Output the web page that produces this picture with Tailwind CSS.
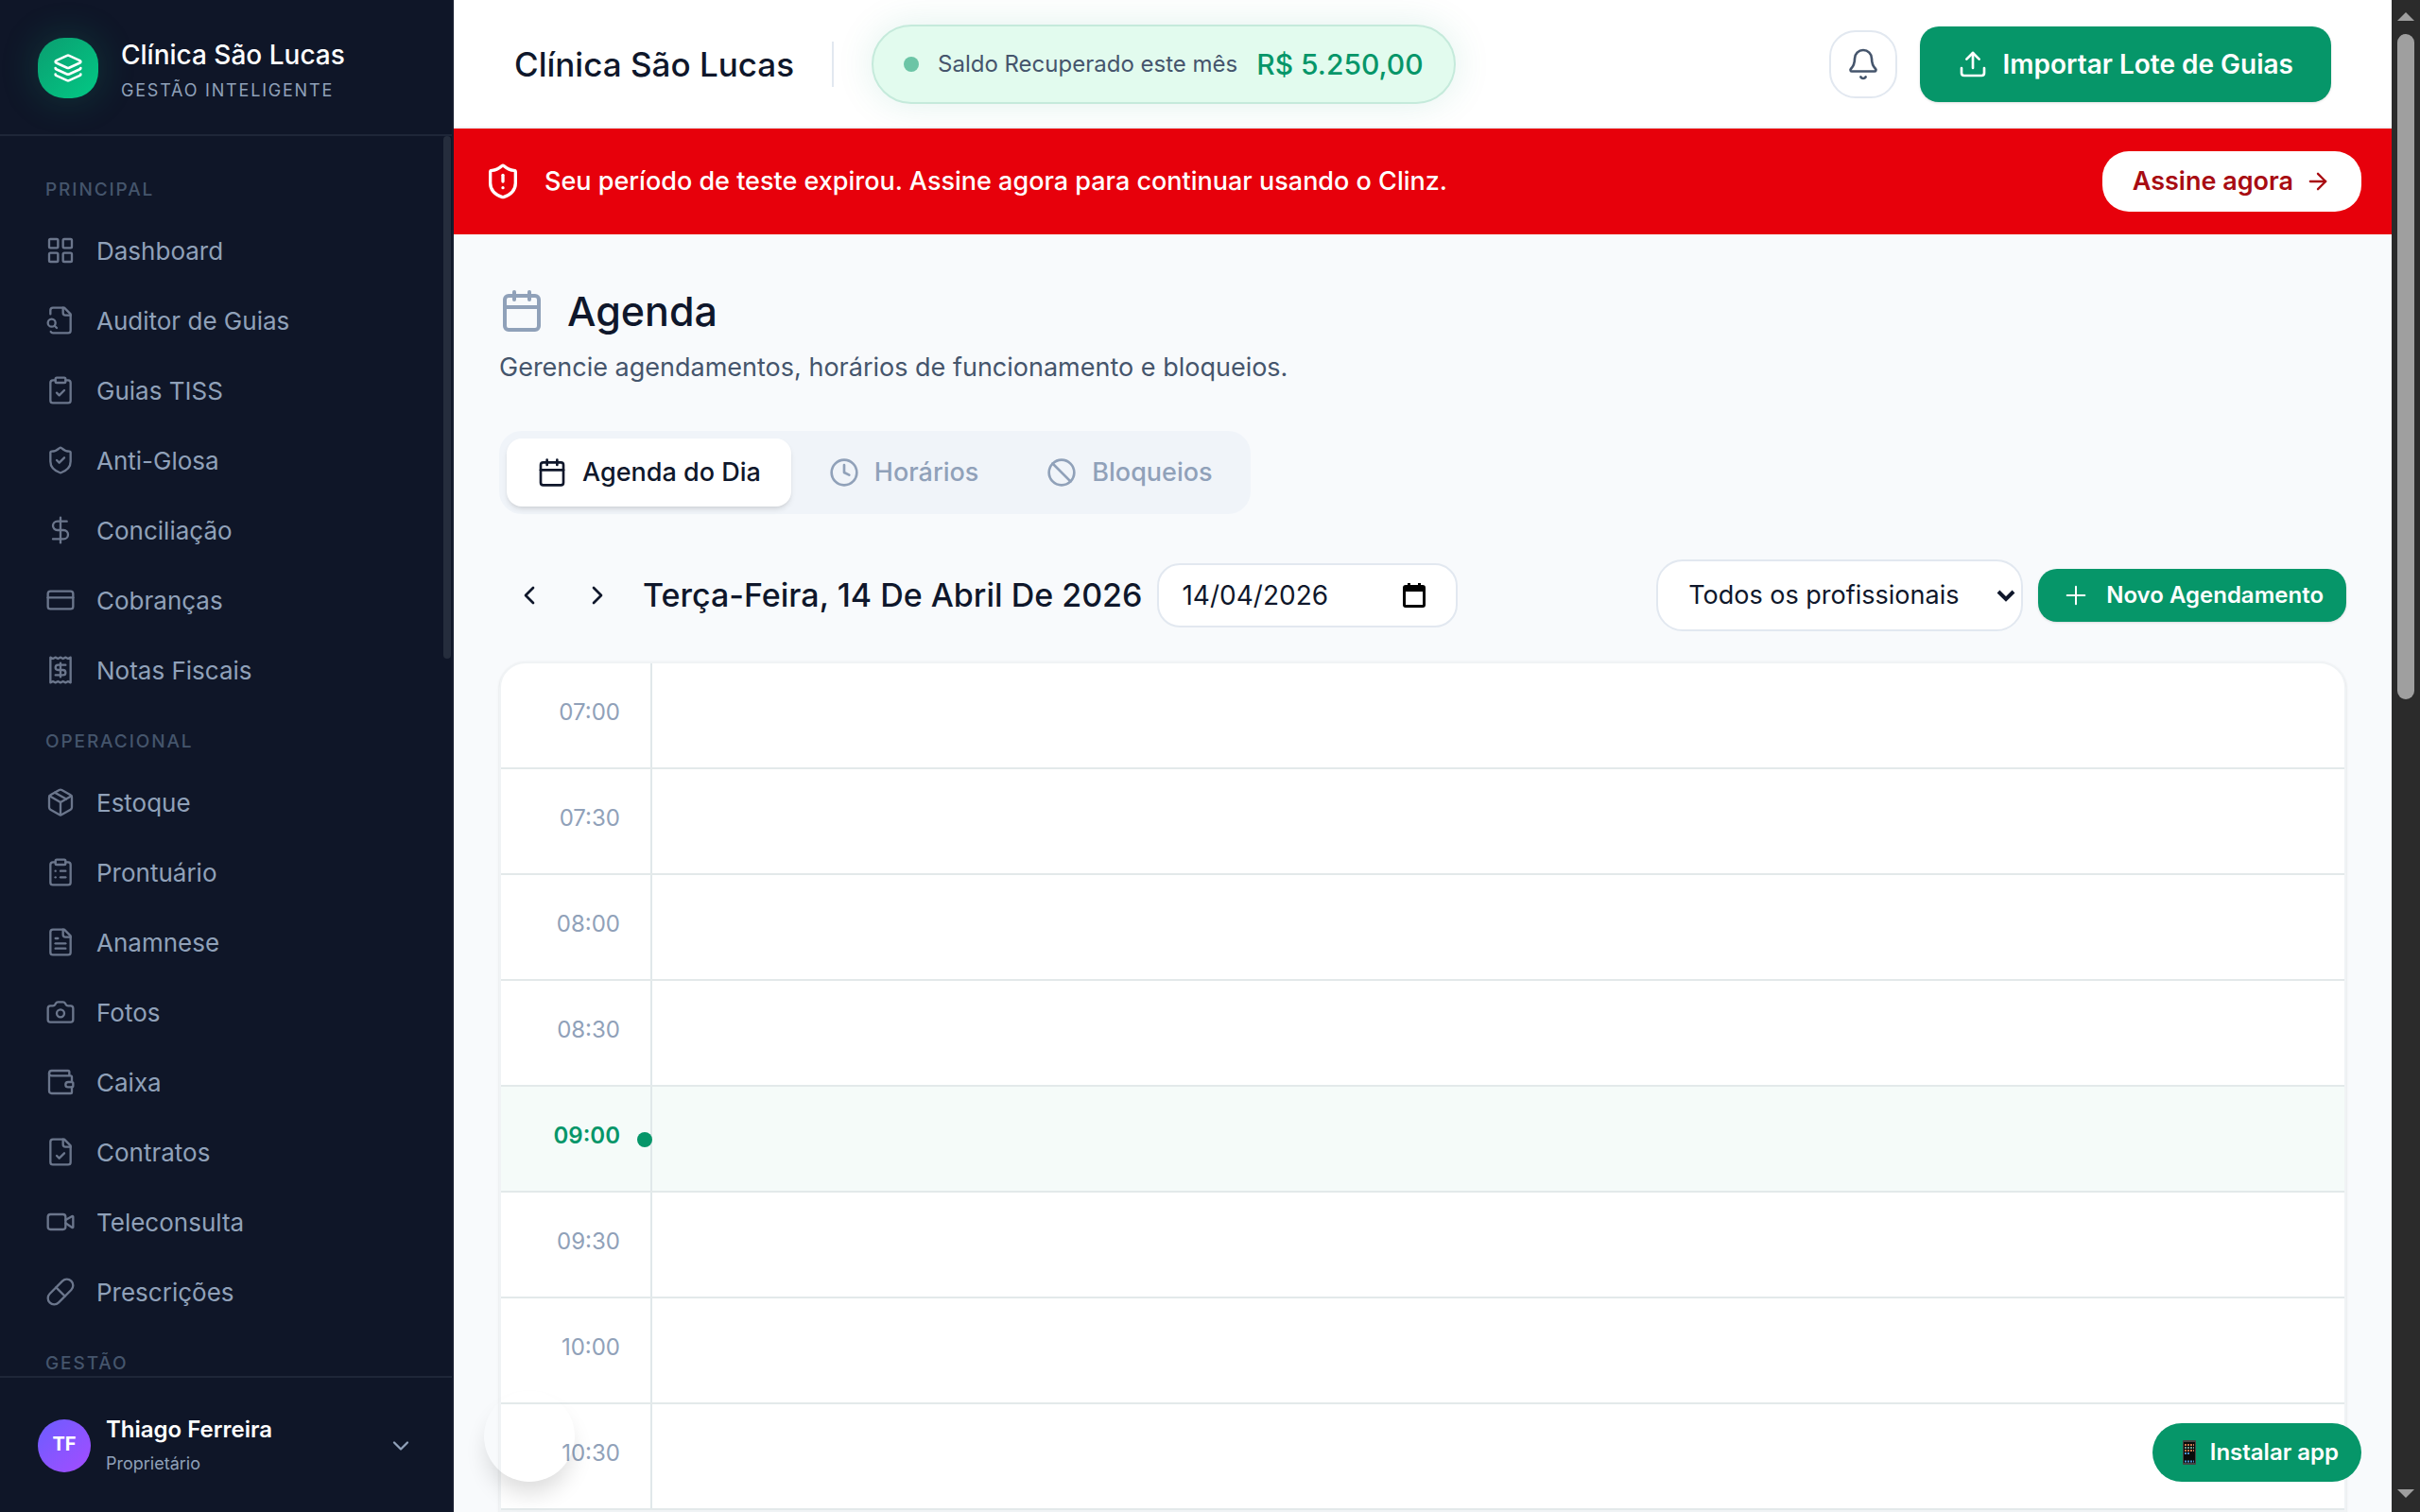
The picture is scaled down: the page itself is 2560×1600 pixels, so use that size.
<!DOCTYPE html>
<html lang="pt-BR">
<head>
  <meta charset="UTF-8" />
  <meta name="viewport" content="width=device-width, initial-scale=1.0" />
  <title>Agenda - Clínica São Lucas</title>
  <script src="https://cdn.jsdelivr.net/npm/@tailwindcss/browser@4"></script>
</head>
<body class="h-screen overflow-hidden flex bg-slate-50 text-slate-900 font-['Inter',sans-serif]">

  <!-- Sidebar -->
  <aside class="w-[480px] shrink-0 h-full flex flex-col bg-[#0f1628] border-r-2 border-[#151c2e]">
    <div class="h-36 shrink-0 flex items-center gap-6 px-10 pt-[2px] border-b-2 border-[#1e2638]">
      <div class="size-16 rounded-[28px] bg-gradient-to-br from-[#0a9e70] to-[#02c985] shadow-[0_0_40px_rgba(16,185,129,0.22)] flex items-center justify-center text-white">
        <svg class="size-8" viewBox="0 0 24 24" fill="none" stroke="currentColor" stroke-width="2" stroke-linecap="round" stroke-linejoin="round"><path d="M12.83 2.18a2 2 0 0 0-1.66 0L2.6 6.08a1 1 0 0 0 0 1.83l8.58 3.91a2 2 0 0 0 1.66 0l8.58-3.9a1 1 0 0 0 0-1.83z"/><path d="M2 12a1 1 0 0 0 .58.91l8.6 3.91a2 2 0 0 0 1.65 0l8.58-3.9A1 1 0 0 0 22 12"/><path d="M2 17a1 1 0 0 0 .58.91l8.6 3.91a2 2 0 0 0 1.65 0l8.58-3.9A1 1 0 0 0 22 17"/></svg>
      </div>
      <div class="pt-2">
        <p class="text-[28px] leading-10 font-medium text-white">Clínica São Lucas</p>
        <p class="text-[18px] leading-9 tracking-widest uppercase text-slate-400">Gestão Inteligente</p>
      </div>
    </div>

    <div class="flex-1 min-h-0 flex">
      <nav id="nav" class="flex-1 overflow-hidden pt-[42px] pl-12 pr-6"></nav>
      <div class="w-2 h-[553px] mr-px rounded-full bg-[#252d3d]"></div>
    </div>

    <button type="button" class="h-36 shrink-0 flex items-center gap-4 px-10 pt-[2px] text-left border-t-2 border-[#1e2638]">
      <span class="size-14 rounded-full bg-gradient-to-br from-[#6a5cff] to-[#a34bff] flex items-center justify-center pb-1 text-[20px] font-bold text-white">TF</span>
      <span class="flex-1 flex flex-col pt-[2px]">
        <span class="text-[24px] leading-9 font-semibold text-white">Thiago Ferreira</span>
        <span class="text-[18px] leading-9 text-slate-400">Proprietário</span>
      </span>
      <svg class="size-7 text-slate-400" viewBox="0 0 24 24" fill="none" stroke="currentColor" stroke-width="2" stroke-linecap="round" stroke-linejoin="round"><path d="m6 9 6 6 6-6"/></svg>
    </button>
  </aside>

  <!-- Main column -->
  <div class="relative flex-1 min-w-0 h-full flex flex-col overflow-hidden">
    <header class="h-[136px] shrink-0 flex items-center px-16 pt-[2px] bg-white border-b-2 border-slate-100">
      <h2 class="text-[35px] leading-[48px] font-medium">Clínica São Lucas</h2>
      <div class="w-[2px] h-12 mx-10 bg-slate-200"></div>
      <div class="h-[84px] flex items-center gap-5 px-8 rounded-full border-2 border-[#c5eadb] bg-[#e2fbee] shadow-[0_0_40px_rgba(5,150,105,0.12)]">
        <span class="size-4 rounded-full bg-[#6cc5a6]"></span>
        <span class="text-[24px] text-slate-600">Saldo Recuperado este mês</span>
        <span class="text-[30px] font-medium text-[#069669]">R$ 5.250,00</span>
      </div>
      <button type="button" aria-label="Notificações" class="ml-auto size-[72px] rounded-[28px] border-2 border-slate-200 bg-white flex items-center justify-center text-slate-600">
        <svg class="size-9" viewBox="0 0 24 24" fill="none" stroke="currentColor" stroke-width="1.75" stroke-linecap="round" stroke-linejoin="round"><path d="M10.268 21a2 2 0 0 0 3.464 0"/><path d="M3.262 15.326A1 1 0 0 0 4 17h16a1 1 0 0 0 .74-1.673C19.41 13.956 18 12.499 18 8A6 6 0 0 0 6 8c0 4.499-1.411 5.956-2.738 7.326"/></svg>
      </button>
      <button type="button" class="ml-6 h-20 px-10 rounded-[20px] bg-[#069669] shadow-sm flex items-center gap-4 text-[28px] font-semibold text-white">
        <svg class="size-8" viewBox="0 0 24 24" fill="none" stroke="currentColor" stroke-width="2" stroke-linecap="round" stroke-linejoin="round"><path d="M12 3v12"/><path d="m17 8-5-5-5 5"/><path d="M21 15v4a2 2 0 0 1-2 2H5a2 2 0 0 1-2-2v-4"/></svg>
        Importar Lote de Guias
      </button>
    </header>

    <div class="h-28 shrink-0 flex items-center gap-6 px-8 bg-[#e7000b] text-white">
      <svg class="size-10" viewBox="0 0 24 24" fill="none" stroke="currentColor" stroke-width="2" stroke-linecap="round" stroke-linejoin="round"><path d="M20 13c0 5-3.5 7.5-7.66 8.95a1 1 0 0 1-.67-.01C7.5 20.5 4 18 4 13V6a1 1 0 0 1 1-1c2 0 4.5-1.2 6.24-2.72a1.17 1.17 0 0 1 1.52 0C14.51 3.81 17 5 19 5a1 1 0 0 1 1 1z"/><path d="M12 8v4"/><path d="M12 16h.01"/></svg>
      <p class="flex-1 text-[27px] font-medium">Seu período de teste expirou. Assine agora para continuar usando o Clinz.</p>
      <a href="#" class="h-16 px-8 rounded-[28px] bg-white flex items-center gap-3 text-[27px] font-semibold text-[#a80c12]">
        Assine agora
        <svg class="size-7" viewBox="0 0 24 24" fill="none" stroke="currentColor" stroke-width="2" stroke-linecap="round" stroke-linejoin="round"><path d="M5 12h14"/><path d="m12 5 7 7-7 7"/></svg>
      </a>
    </div>

    <main class="flex-1 min-h-0 overflow-hidden px-12 pt-12">
      <div class="flex items-center gap-6">
        <svg class="size-12 text-slate-400" viewBox="0 0 24 24" fill="none" stroke="currentColor" stroke-width="2" stroke-linecap="round" stroke-linejoin="round"><path d="M8 2v4"/><path d="M16 2v4"/><rect width="18" height="18" x="3" y="4" rx="2"/><path d="M3 10h18"/></svg>
        <h1 class="text-[43px] leading-[66px] font-medium">Agenda</h1>
      </div>
      <p class="text-[27px] leading-[54px] text-slate-600">Gerencie agendamentos, horários de funcionamento e bloqueios.</p>

      <div role="tablist" class="mt-10 w-fit flex gap-2 p-2 rounded-3xl bg-[#f0f4f9] text-[27px] font-medium text-slate-400">
        <button type="button" role="tab" aria-selected="true" class="h-[72px] px-8 rounded-2xl bg-white shadow-md flex items-center gap-4 text-slate-900">
          <svg class="size-8" viewBox="0 0 24 24" fill="none" stroke="currentColor" stroke-width="2" stroke-linecap="round" stroke-linejoin="round"><path d="M8 2v4"/><path d="M16 2v4"/><rect width="18" height="18" x="3" y="4" rx="2"/><path d="M3 10h18"/></svg>
          Agenda do Dia
        </button>
        <button type="button" role="tab" aria-selected="false" class="h-[72px] px-8 rounded-2xl flex items-center gap-4">
          <svg class="size-8" viewBox="0 0 24 24" fill="none" stroke="currentColor" stroke-width="2" stroke-linecap="round" stroke-linejoin="round"><circle cx="12" cy="12" r="10"/><path d="M12 6v6l4 2"/></svg>
          Horários
        </button>
        <button type="button" role="tab" aria-selected="false" class="h-[72px] px-8 rounded-2xl flex items-center gap-4">
          <svg class="size-8" viewBox="0 0 24 24" fill="none" stroke="currentColor" stroke-width="2" stroke-linecap="round" stroke-linejoin="round"><circle cx="12" cy="12" r="10"/><path d="m4.9 4.9 14.2 14.2"/></svg>
          Bloqueios
        </button>
      </div>

      <div class="mt-12 flex items-center justify-between">
        <div class="flex items-center gap-4">
          <div class="flex items-center gap-2">
            <button type="button" aria-label="Dia anterior" class="size-16 flex items-center justify-center">
              <svg class="size-8" viewBox="0 0 24 24" fill="none" stroke="currentColor" stroke-width="2" stroke-linecap="round" stroke-linejoin="round"><path d="m15 18-6-6 6-6"/></svg>
            </button>
            <button type="button" aria-label="Próximo dia" class="size-16 flex items-center justify-center">
              <svg class="size-8" viewBox="0 0 24 24" fill="none" stroke="currentColor" stroke-width="2" stroke-linecap="round" stroke-linejoin="round"><path d="m9 18 6-6-6-6"/></svg>
            </button>
          </div>
          <h3 class="text-[34px] leading-[48px] font-medium">Terça-Feira, 14 De Abril De 2026</h3>
          <div class="w-[318px] h-[68px] flex items-center pl-6 pr-8 rounded-3xl border-2 border-slate-200 bg-white">
            <input id="dia" type="text" value="14/04/2026" aria-label="Data" class="min-w-0 flex-1 text-[28px] outline-none" />
            <svg class="w-6 h-[26px] text-black" viewBox="0 0 24 26"><path fill="currentColor" fill-rule="evenodd" d="M5 0h3v2h8V0h3v2h2a3 3 0 0 1 3 3v18a3 3 0 0 1-3 3H3a3 3 0 0 1-3-3V5a3 3 0 0 1 3-3h2zM3 9v14h18V9z"/></svg>
          </div>
        </div>
        <div class="flex items-center gap-4">
          <div class="relative">
            <select aria-label="Profissional" class="appearance-none w-[388px] h-[76px] px-8 rounded-[28px] border-2 border-slate-200 bg-white text-[27px]">
              <option>Todos os profissionais</option>
            </select>
            <svg class="absolute right-2 top-7 w-5 h-5 pointer-events-none" viewBox="0 0 20 20" fill="none" stroke="currentColor" stroke-width="4"><path d="m2 6 8 8 8-8"/></svg>
          </div>
          <button type="button" class="h-14 px-6 rounded-[20px] bg-[#069669] shadow-sm flex items-center gap-4 text-[24px] font-semibold text-white">
            <svg class="size-8" viewBox="0 0 24 24" fill="none" stroke="currentColor" stroke-width="1.5" stroke-linecap="round" stroke-linejoin="round"><path d="M5 12h14"/><path d="M12 5v14"/></svg>
            Novo Agendamento
          </button>
        </div>
      </div>

      <div id="agenda" class="mt-8 rounded-t-[28px] border-2 border-[#f0f3f5] bg-white shadow-sm overflow-hidden"></div>
    </main>

    <!-- Floating controls -->
    <div class="absolute left-8 bottom-8 size-24 rounded-full shadow-[0_16px_24px_-4px_rgba(0,0,0,0.14)]"></div>
    <button type="button" class="absolute right-8 bottom-8 h-[62px] pl-8 pr-6 rounded-full bg-[#069669] flex items-center gap-[15px] text-[24px] font-semibold text-white">
      <svg class="w-[14px] h-[26px]" viewBox="0 0 14 26"><rect width="14" height="26" rx="1" fill="#444"/><rect x="1" y="2" width="12" height="22" fill="#0a0a0a"/><path stroke="#c9744c" stroke-width="2" stroke-dasharray="2 1" d="M2 5h10M2 11h10"/><path stroke="#6f9a8c" stroke-width="2" stroke-dasharray="2 1" d="M2 8h10"/><path stroke="#4a90d0" stroke-width="2" stroke-dasharray="2 1" d="M2 14h5M2 22.5h10"/></svg>
      Instalar app
    </button>
  </div>

  <!-- Page scrollbar -->
  <div class="w-[30px] shrink-0 h-full flex flex-col items-center justify-between bg-[#2b2b2b] text-[#9f9f9f]">
    <div class="flex flex-col items-center">
      <svg class="w-[18px] h-9" viewBox="0 0 18 36" fill="currentColor"><path d="M9 13l9 9H0z"/></svg>
      <div class="w-[18px] h-[704px] rounded-full bg-[#9f9f9f]"></div>
    </div>
    <svg class="w-[18px] h-9" viewBox="0 0 18 36" fill="currentColor"><path d="M0 12h18l-9 9z"/></svg>
  </div>

  <script>
    const file = '<path d="M15 2H6a2 2 0 0 0-2 2v16a2 2 0 0 0 2 2h12a2 2 0 0 0 2-2V7Z"/><path d="M14 2v4a2 2 0 0 0 2 2h4"/>';
    const clipboard = '<rect width="8" height="4" x="8" y="2" rx="1"/><path d="M16 4h2a2 2 0 0 1 2 2v14a2 2 0 0 1-2 2H6a2 2 0 0 1-2-2V6a2 2 0 0 1 2-2h2"/>';

    const sections = [
      { title: 'Principal', items: [
        ['Dashboard', '<rect width="7" height="7" x="3" y="3" rx="1"/><rect width="7" height="7" x="14" y="3" rx="1"/><rect width="7" height="7" x="14" y="14" rx="1"/><rect width="7" height="7" x="3" y="14" rx="1"/>'],
        ['Auditor de Guias', '<path d="M14 2v4a2 2 0 0 0 2 2h4"/><path d="M4.268 21a2 2 0 0 0 1.727 1H18a2 2 0 0 0 2-2V7l-5-5H6a2 2 0 0 0-2 2v3"/><path d="m9 18-1.5-1.5"/><circle cx="5" cy="14" r="3"/>'],
        ['Guias TISS', clipboard + '<path d="m9 14 2 2 4-4"/>'],
        ['Anti-Glosa', '<path d="M20 13c0 5-3.5 7.5-7.66 8.95a1 1 0 0 1-.67-.01C7.5 20.5 4 18 4 13V6a1 1 0 0 1 1-1c2 0 4.5-1.2 6.24-2.72a1.17 1.17 0 0 1 1.52 0C14.51 3.81 17 5 19 5a1 1 0 0 1 1 1z"/><path d="m9 12 2 2 4-4"/>'],
        ['Conciliação', '<path d="M12 2v20"/><path d="M17 5H9.5a3.5 3.5 0 0 0 0 7h5a3.5 3.5 0 0 1 0 7H6"/>'],
        ['Cobranças', '<rect width="20" height="14" x="2" y="5" rx="2"/><path d="M2 10h20"/>'],
        ['Notas Fiscais', '<path d="M4 2v20l2-1 2 1 2-1 2 1 2-1 2 1 2-1 2 1V2l-2 1-2-1-2 1-2-1-2 1-2-1-2 1Z"/><path d="M16 8h-6a2 2 0 1 0 0 4h4a2 2 0 1 1 0 4H8"/><path d="M12 17.5v-11"/>'],
      ]},
      { title: 'Operacional', items: [
        ['Estoque', '<path d="m7.5 4.27 9 5.15"/><path d="M21 8a2 2 0 0 0-1-1.73l-7-4a2 2 0 0 0-2 0l-7 4A2 2 0 0 0 3 8v8a2 2 0 0 0 1 1.73l7 4a2 2 0 0 0 2 0l7-4A2 2 0 0 0 21 16Z"/><path d="m3.3 7 8.7 5 8.7-5"/><path d="M12 22V12"/>'],
        ['Prontuário', clipboard + '<path d="M12 11h4"/><path d="M12 16h4"/><path d="M8 11h.01"/><path d="M8 16h.01"/>'],
        ['Anamnese', file + '<path d="M10 9H8"/><path d="M16 13H8"/><path d="M16 17H8"/>'],
        ['Fotos', '<path d="M13.997 4a2 2 0 0 1 1.76 1.05l.486.9A2 2 0 0 0 18.003 7H20a2 2 0 0 1 2 2v9a2 2 0 0 1-2 2H4a2 2 0 0 1-2-2V9a2 2 0 0 1 2-2h1.997a2 2 0 0 0 1.759-1.048l.489-.904A2 2 0 0 1 10.004 4z"/><circle cx="12" cy="13" r="3"/>'],
        ['Caixa', '<path d="M19 7V4a1 1 0 0 0-1-1H5a2 2 0 0 0 0 4h15a1 1 0 0 1 1 1v4h-3a2 2 0 0 0 0 4h3a1 1 0 0 0 1-1v-2a1 1 0 0 0-1-1"/><path d="M3 5v14a2 2 0 0 0 2 2h15a1 1 0 0 0 1-1v-4"/>'],
        ['Contratos', file + '<path d="m9 15 2 2 4-4"/>'],
        ['Teleconsulta', '<path d="m16 13 5.223 3.482a.5.5 0 0 0 .777-.416V7.87a.5.5 0 0 0-.752-.432L16 10.5"/><rect x="2" y="6" width="14" height="12" rx="2"/>'],
        ['Prescrições', '<path d="m10.5 20.5 10-10a4.95 4.95 0 1 0-7-7l-10 10a4.95 4.95 0 1 0 7 7Z"/><path d="m8.5 8.5 7 7"/>'],
      ]},
      { title: 'Gestão', items: [] },
    ];

    document.getElementById('nav').innerHTML = sections.map(({ title, items }) => `
      <section class="mb-6">
        <h4 class="mb-3 text-[19px] leading-[30px] font-medium tracking-widest uppercase text-slate-600">${title}</h4>
        ${items.map(([label, icon]) => `
          <a href="#" class="h-[74px] flex items-center gap-[22px] text-[26px] text-slate-400">
            <svg class="size-8 text-[#6b768c]" viewBox="0 0 24 24" fill="none" stroke="currentColor" stroke-width="1.75" stroke-linecap="round" stroke-linejoin="round">${icon}</svg>
            ${label}
          </a>`).join('')}
      </section>`).join('');

    const now = '09:00';
    const hours = ['07:00', '07:30', '08:00', '08:30', '09:00', '09:30', '10:00', '10:30'];

    document.getElementById('agenda').innerHTML = hours.map((hour) => {
      const active = hour === now;
      return `
        <div class="h-28 flex border-b-2 border-[#e3e9ea] ${active ? 'bg-[#f5fbf9]' : ''}">
          <div class="relative w-40 shrink-0 pr-8 pt-[34px] border-r-2 border-[#e0e8ea] text-right text-[24px] leading-9 ${active ? 'font-semibold text-[#069669]' : 'text-slate-400'}">
            ${hour}
            ${active ? '<span class="absolute -right-[2px] top-12 size-4 rounded-full bg-[#069669]"></span>' : ''}
          </div>
          <div class="flex-1"></div>
        </div>`;
    }).join('');
  </script>
</body>
</html>
